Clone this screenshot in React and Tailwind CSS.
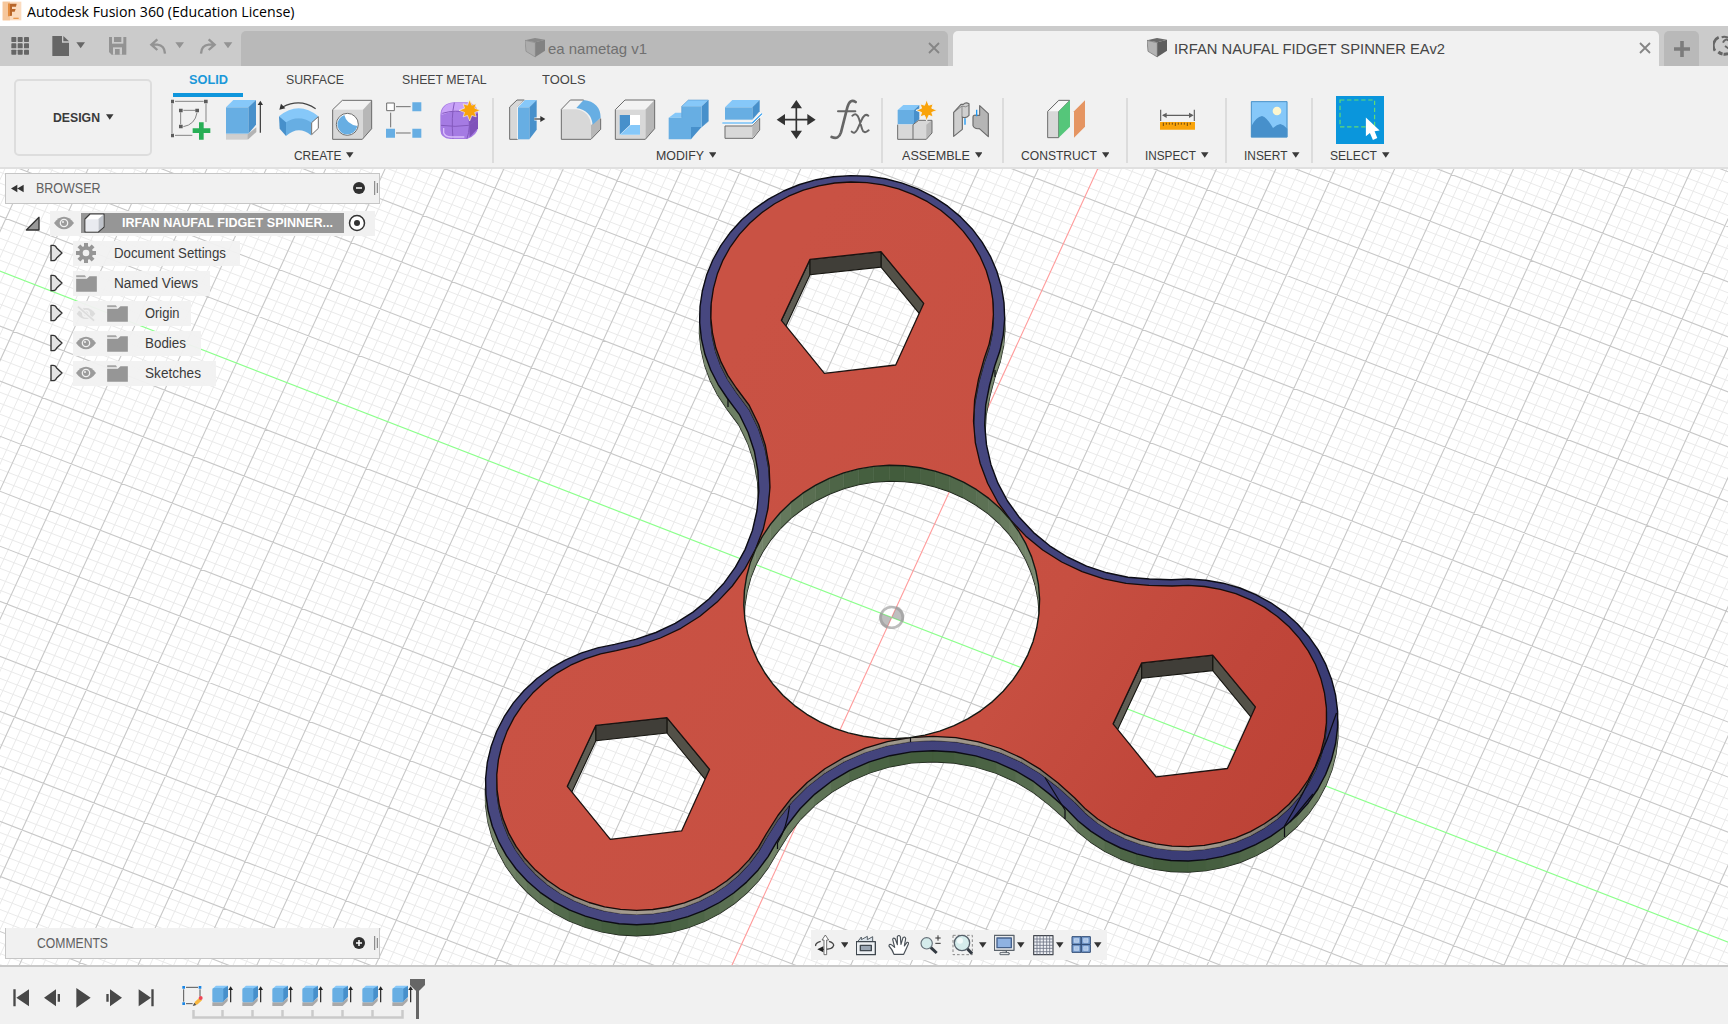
import React, { useLayoutEffect, useRef } from "react";

/* ---------- text fitted to a fixed width ---------- */
function Fit({ w, className = "", children }) {
  const ref = useRef(null);
  useLayoutEffect(() => {
    const el = ref.current;
    el.style.transform = "none";
    const n = el.getBoundingClientRect().width;
    if (n) el.style.transform = `scaleX(${w / n})`;
  }, [w]);
  return (
    <span className={`block shrink-0 text-left ${className}`} style={{ width: w }}>
      <span ref={ref} className="inline-block origin-left whitespace-nowrap">{children}</span>
    </span>
  );
}

const Caret = ({ className = "text-[#3a3a3a]" }) => (
  <svg width="7.5" height="6" viewBox="0 0 8 6" className={`shrink-0 ${className}`}>
    <path d="M0 0h8L4 6z" fill="currentColor" />
  </svg>
);

/* ---------- spinner geometry ---------- */
const U = [50.4, 19.57];
const V = [21.45, -46.7];
const CX = 891.7;
const LEVEL = { top: 602, ring: 606, base: 616.8 };
const HOLE_R = 2.7;
const ARMS = [[5.825, 0], [5.765, 120.25], [5.795, 240]];
const FILLET_D = 6.016;
const project = ([a, b], cy) => [CX + a * U[0] + b * V[0], cy + a * U[1] + b * V[1]];
const rad = (d) => (d * Math.PI) / 180;
const pol = (r, d) => [r * Math.cos(rad(d)), r * Math.sin(rad(d))];
const angle = (p, q) => (Math.atan2(q[1] - p[1], q[0] - p[0]) * 180) / Math.PI;
const norm = (d) => ((d % 360) + 360) % 360;

function outline(lobe, fillet) {
  const pts = [];
  for (let k = 0; k < 3; k++) {
    const c = pol(...ARMS[k]);
    const next = pol(...ARMS[(k + 1) % 3]);
    const f = pol(FILLET_D, k * 120 + 60);
    const prev = pol(FILLET_D, k * 120 - 60);
    const a1 = angle(c, prev);
    const span = norm(angle(c, f) - a1);
    for (let i = 0; i <= 36; i++) {
      const p = pol(lobe, a1 + (span * i) / 36);
      pts.push([c[0] + p[0], c[1] + p[1]]);
    }
    const b1 = angle(f, c);
    const turn = norm(b1 - angle(f, next));
    for (let i = 1; i < 16; i++) {
      const p = pol(fillet, b1 - (turn * i) / 16);
      pts.push([f[0] + p[0], f[1] + p[1]]);
    }
  }
  return pts;
}
const circle = Array.from({ length: 60 }, (_, i) => pol(HOLE_R, i * 6));
const toPath = (pts) => "M" + pts.map((p) => p[0].toFixed(1) + " " + p[1].toFixed(1)).join("L") + "Z";
const at = (pts, cy) => pts.map((p) => project(p, cy));

function mix(a, b, t) {
  return `rgb(${a.map((v, i) => Math.round(v + (b[i] - v) * t)).join(",")})`;
}
function wall(pts, y1, y2, inner, c1, c2) {
  const out = [];
  const A = at(pts, y1);
  for (let i = 0; i < A.length; i++) {
    const p = A[i];
    const q = A[(i + 1) % A.length];
    const dx = q[0] - p[0];
    const dy = q[1] - p[1];
    const len = Math.hypot(dx, dy) || 1;
    const facing = inner ? dx > 0 : dx < 0;
    if (facing) continue;
    const t = Math.pow(Math.abs(dy) / len, 1.6);
    const h = y2 - y1;
    out.push({
      d: toPath([p, q, [q[0], q[1] + h], [p[0], p[1] + h]]),
      c: mix(c1, c2, t),
    });
  }
  return out;
}
const OUT = outline(2.785, 3.11);
const IN = outline(2.58, 3.315);
const GREEN = [[66, 92, 60], [128, 142, 117]];
const TAN = [[164, 156, 143], [70, 68, 62]];
const greenWalls = wall(OUT, LEVEL.ring, LEVEL.base, false, GREEN[0], GREEN[1]);
const tanWalls = wall(IN, LEVEL.top, LEVEL.ring, false, TAN[0], TAN[1]);
const holeWalls = wall(circle, LEVEL.top, 617.4, true, GREEN[0], GREEN[1]);

const HEX = [[-42.7, -52.8], [28.3, -60.5], [71, -8.8], [43, 52.8], [-28.3, 61.2], [-71.3, 8.2]];
const HEX_C = [[852.7, 312.2], [1184.4, 715.7], [638.6, 778.1]];
const hexAt = (c) => HEX.map((p) => [p[0] + c[0], p[1] + c[1]]);

function gridPath(step, skip) {
  let d = "";
  const L = 34;
  for (let i = -L * step; i <= L * step; i++) {
    if (skip && i % step === 0) continue;
    const k = i / step;
    if (!skip && i === 0) continue;
    const a = project([k, -L], 617.4);
    const b = project([k, L], 617.4);
    const c = project([-L, k], 617.4);
    const e = project([L, k], 617.4);
    d += `M${a[0].toFixed(1)} ${a[1].toFixed(1)}L${b[0].toFixed(1)} ${b[1].toFixed(1)}M${c[0].toFixed(1)} ${c[1].toFixed(1)}L${e[0].toFixed(1)} ${e[1].toFixed(1)}`;
  }
  return d;
}
const MINOR = gridPath(5, true);
const MAJOR = gridPath(1, false);

function Walls({ list }) {
  return list.map((w, i) => <path key={i} d={w.d} fill={w.c} stroke={w.c} strokeWidth="0.6" />);
}

function Scene() {
  const topHole = toPath(at(circle, LEVEL.top));
  const g = project([0, 20], 617.4);
  const g2 = project([0, -20], 617.4);
  const h = project([-20, 0], 617.4);
  const h2 = project([20, 0], 617.4);
  return (
    <svg className="block h-full w-full" viewBox="0 169 1728 796" preserveAspectRatio="none">
      <defs>
        <linearGradient id="red" gradientUnits="userSpaceOnUse" x1="700" y1="400" x2="1330" y2="800">
          <stop offset="0" stopColor="#c95244" />
          <stop offset="0.55" stopColor="#c74f41" />
          <stop offset="0.8" stopColor="#c0463a" />
          <stop offset="1" stopColor="#bc4235" />
        </linearGradient>
        <linearGradient id="blue" gradientUnits="userSpaceOnUse" x1="900" y1="500" x2="1330" y2="760">
          <stop offset="0" stopColor="#47477f" />
          <stop offset="1" stopColor="#393b74" />
        </linearGradient>
        <clipPath id="hole"><path d={topHole} /></clipPath>
        {HEX_C.map((c, i) => <clipPath key={i} id={`hex${i}`}><path d={toPath(hexAt(c))} /></clipPath>)}
        <g id="grid">
          <rect x="0" y="160" width="1728" height="820" fill="#fff" />
          <path d={MINOR} stroke="#eaeaea" strokeWidth="1" fill="none" />
          <path d={MAJOR} stroke="#c8c8c8" strokeWidth="1.1" fill="none" />
          <path d={`M${g}L${g2}`} stroke="#ff9a9a" strokeWidth="1.1" />
          <path d={`M${h}L${h2}`} stroke="#8cff8c" strokeWidth="1.2" />
        </g>
      </defs>
      <use href="#grid" />
      <g strokeLinejoin="round">
        <path d={toPath(at(OUT, LEVEL.base))} fill="#4a6344" stroke="#141812" strokeWidth="1.8" />
        <Walls list={greenWalls} />
        <path d={toPath(at(OUT, LEVEL.ring))} fill="url(#blue)" stroke="#0c0c14" strokeWidth="1.4" />
        <path d={toPath(at(IN, LEVEL.ring))} fill="none" stroke="#0c0c14" strokeWidth="1.4" />
        <Walls list={tanWalls} />
        <path d={toPath(at(IN, LEVEL.top))} fill="url(#red)" stroke="#180c0a" strokeWidth="1.3" />
        <g fill="none" stroke="#0c0c14" strokeWidth="1.2">
          <path d="M789.5 806Q787 828 777.5 843v6" />
          <path d="M1045 777.500L1065 810v9" />
          <path d="M1336.500 713Q1318 770 1284.500 826v11" />
          <path d="M1313 794L1290 822M910.500 737v5M728 399v8M995 370v7" />
        </g>
        {HEX_C.map((c, i) => {
          const v = hexAt(c);
          const face = (a, b, col) => (
            <path d={toPath([v[a], v[b], [v[b][0], v[b][1] + 15.4], [v[a][0], v[a][1] + 15.4]])} fill={col} stroke="#15140f" strokeWidth="1.1" />
          );
          return (
            <g key={i}>
              <g clipPath={`url(#hex${i})`}>
                <use href="#grid" />
                {face(5, 0, "#5f5d54")}
                {face(1, 2, "#535148")}
                {face(0, 1, "#403e38")}
              </g>
              <path d={toPath(v)} fill="none" stroke="#1c1210" strokeWidth="1.3" />
            </g>
          );
        })}
        <g clipPath="url(#hole)">
          <use href="#grid" />
          <g>
            <path d={toPath(at(circle, 617.4))} fill="none" stroke="#141812" strokeWidth="2" />
            <Walls list={holeWalls} />
          </g>
        </g>
        <path d={topHole} fill="none" stroke="#141812" strokeWidth="1.4" />
      </g>
      <g fill="#8a8a8a" fillOpacity="0.55">
        <path d="M891.700 617.400L896.800 606.300A12 11.500 0 0 1 903.100 621.800Z" />
        <path d="M891.700 617.400L886.600 628.500A12 11.500 0 0 1 880.300 613Z" />
        <ellipse cx="891.700" cy="617.400" rx="11" ry="10.400" fill="none" stroke="#9a9a9a" strokeOpacity="0.65" strokeWidth="2.600" />
      </g>
    </svg>
  );
}

/* ---------- toolbar icons ---------- */
const Ico = ({ x, w = 161, children }) => (
  <svg className="block shrink-0" width={w / 3} height="42" viewBox={`${x} 297 ${w} 126`} strokeLinejoin="round">{children}</svg>
);
const B = "#67aee3", BL = "#86c8f9", BD = "#4790cb", G = "#d8d8d8", GD = "#b7b7b7", GL = "#f3f3f3", S = "#6b6b6b";
const star = (cx, cy, R) => {
  const p = [];
  for (let i = 0; i < 16; i++) {
    const r = i % 2 ? R * 0.52 : i % 4 === 0 ? R : R * 0.86;
    const a = (i * Math.PI) / 8;
    p.push([cx + r * Math.sin(a), cy - r * Math.cos(a)]);
  }
  return toPath(p);
};

const CreateIcons = () => (
  <>
    <Ico x={516}>
      <g stroke="#858585" strokeWidth="3" fill="none">
        <path d="M528 304H614M519 311V400M621 311V366M528 406H580M553 331H590M545 337V373M553 380Q588 374 594 338" />
      </g>
      <path d="M514 299h11v11h-11zM615 299h11v11h-11zM514 401h11v11h-11zM540 326h11v11h-11zM589 326h11v11h-11zM540 374h11v11h-11z" fill="#5c5c5c" />
      <path d="M600 367h14v18h20v14h-20v20h-14v-20h-19v-14h19z" fill="#27ae55" />
    </Ico>
    <Ico x={676}>
      <path d="M679 403h65l26-21v14l-24 22h-67z" fill="#b3b3b3" /><path d="M679 403h65v15h-65z" fill="#cfcfcf" />
      <path d="M679 322L701 300H769L746 322z" fill={BL} /><path d="M746 322L769 300V374L746 401z" fill={BD} />
      <path d="M679 322H746V401H679z" fill={B} />
      <path d="M782 398V312" stroke="#333" strokeWidth="3.500" /><path d="M774 315l8-13 8 13z" fill="#333" />
    </Ico>
    <Ico x={837}>
      <path d="M848 321Q900 294 947 326" fill="none" stroke="#444" strokeWidth="3.500" /><path d="M838 329l5-18 13 14z" fill="#333" />
      <path d="M837 349Q896 301 955 349L933 372Q896 340 858 372z" fill={BL} />
      <path d="M837 349L858 367V408L839 386z" fill={BD} />
      <path d="M858 367Q896 342 933 367V406Q896 375 858 408z" fill={B} />
      <path d="M935 368L955 350V385L935 404z" fill="#fff" stroke={S} strokeWidth="3" />
    </Ico>
    <Ico x={997}>
      <path d="M998 329L1028 300H1117L1090 329z" fill={GL} /><path d="M1090 329L1117 300V386L1088 418z" fill={GD} />
      <path d="M998 329H1090V418H998z" fill={G} /><path d="M999 329L1028 301H1116V386L1088 418H999z" fill="none" stroke={S} strokeWidth="3" />
      <circle cx="1043" cy="373" r="33" fill="#fff" stroke={S} strokeWidth="3" />
      <path d="M1034 345Q1040 372 1073 378A30 30 0 1 1 1034 345z" fill={B} />
    </Ico>
    <Ico x={1158}>
      <path d="M1188 320H1232M1172 338V382M1188 399H1232" stroke="#6f6f6f" strokeWidth="3" />
      <rect x="1160" y="309" width="23" height="23" fill="#fff" stroke={S} strokeWidth="3" />
      <path d="M1237 307h27v27h-27zM1158 386h27v27h-27zM1237 386h27v27h-27z" fill={B} />
    </Ico>
    <Ico x={1319}>
      <path d="M1320 345Q1322 310 1360 307H1400Q1434 312 1433 345V380Q1432 405 1400 417H1350Q1321 415 1320 390z" fill="#a57be3" />
      <path d="M1324 335Q1330 310 1362 308L1415 308 1405 332Q1360 330 1324 345z" fill="#c9a3f8" />
      <path d="M1405 350L1433 340V385L1408 412z" fill="#7f52ba" />
      <path d="M1322 376Q1365 382 1405 376L1432 358M1362 308Q1352 350 1358 416M1326 340Q1365 328 1404 338Q1412 380 1400 416" fill="none" stroke="#8459bd" strokeWidth="3" />
      <path d="M1330 384V398Q1334 410 1352 411H1392" fill="none" stroke="#d9bdfb" strokeWidth="4" />
      <path d={star(1408, 331, 32)} fill="#f9a30a" stroke="#f1f1f1" strokeWidth="2" />
    </Ico>
  </>
);

const ModifyIcons = () => (
  <>
    <Ico x={80}>
      <path d="M88 321L110 300H132L112 321V418H88z" fill={G} stroke={S} strokeWidth="3" />
      <path d="M110 321L132 300V418H110z" fill="#f1f1f1" />
      <path d="M113 322L134 300H169L147 322z" fill={BL} /><path d="M147 322L169 300V389L147 418z" fill={BD} /><path d="M113 322H147V418H113z" fill={B} />
      <path d="M162 357H184" stroke="#fff" strokeWidth="9" /><path d="M162 357H182" stroke="#333" strokeWidth="3.500" /><path d="M180 348l15 9-15 9z" fill="#333" />
    </Ico>
    <Ico x={241}>
      <path d="M245 328L272 300H312L290 328z" fill={GL} /><path d="M334 375L363 353V388L334 418z" fill={GD} />
      <path d="M245 328H290Q330 334 334 375V418H245z" fill={G} />
      <path d="M290 324L312 300Q362 306 363 353L339 374Q335 332 290 324z" fill={B} />
      <path d="M312 300H272L245 328V418H334L363 388V356" fill="none" stroke={S} strokeWidth="3" />
    </Ico>
    <Ico x={402}>
      <path d="M406 329L435 300H524L496 329z" fill={GL} /><path d="M496 329L524 300V386L496 418z" fill={GD} /><path d="M406 329H496V418H406z" fill={G} />
      <path d="M406 329L435 300H524V386L496 418H406z" fill="none" stroke={S} strokeWidth="3" />
      <path d="M419 345H480V404H419z" fill="#fff" /><path d="M419 345H450V375L419 404z" fill={BD} /><path d="M452 375H480V404H420z" fill={BL} />
    </Ico>
    <Ico x={562}>
      <path d="M606 319L626 300H686L666 319z" fill={BL} /><path d="M666 319L686 300V364L666 381z" fill={BD} /><path d="M567 353L587 338H606V353z" fill={BL} />
      <path d="M634 381H666L648 401 634 418z" fill={BD} /><path d="M606 319H666V381H634V418H567V353H606z" fill={B} />
      <path d="M606 353V319L626 300H686V364L666 381" fill="none" stroke={BD} strokeWidth="1.5" />
    </Ico>
    <Ico x={724}>
      <path d="M736 322L758 300H840L818 322z" fill={BL} /><path d="M818 322L840 300V334L818 359z" fill={BD} /><path d="M736 322H818V359H736z" fill={B} />
      <path d="M736 378H818L840 355V390L820 415H736z" fill={G} stroke={S} strokeWidth="3" /><path d="M818 378L838 358V390L818 413z" fill={GD} />
      <path d="M728 369H818L847 341" fill="none" stroke="#fff" strokeWidth="8" /><path d="M728 369H818L847 341" fill="none" stroke="#2f9df0" strokeWidth="3.500" />
    </Ico>
    <Ico x={885}>
      <path d="M949 318V400M910 359H988" stroke="#333" strokeWidth="5" />
      <path d="M932 325l17-25 17 25zM932 392l17 25 17-25zM915 342l-25 17 25 17zM982 342l25 17-25 17z" fill="#333" />
    </Ico>
    <Ico x={1044}>
      <g fill="none" stroke="#666" strokeWidth="8" strokeLinecap="round">
        <path d="M1127 306Q1110 294 1102 322L1083 397Q1076 420 1055 411" />
        <path d="M1074 334H1126M1117 347Q1131 336 1137 356L1146 386Q1151 404 1166 391M1165 347Q1154 338 1144 362L1132 388Q1124 404 1115 395" strokeWidth="6" />
      </g>
    </Ico>
  </>
);

const AssembleIcons = () => (
  <>
    <Ico x={51}>
      <path d="M53 330L70 315H118L102 330z" fill={BL} /><path d="M102 330L118 315V358L102 373z" fill={BD} /><path d="M53 330H102V373H53z" fill={B} />
      <path d="M53 374H99V418H53z" fill={G} /><path d="M99 374L114 361H156V399L139 418H99z" fill={G} /><path d="M139 374L156 361V399L139 418z" fill={GD} />
      <path d="M53 374V418H139L156 399V361H116L99 374V418" fill="none" stroke={S} strokeWidth="3" />
      <path d={star(140, 331, 32)} fill="#f9a30a" stroke="#f1f1f1" strokeWidth="3" />
    </Ico>
    <Ico x={211} w={124}>
      <path d="M222 337L244 313H251Q258 305 268 311V346Q260 356 248 351V388L222 409z" fill="#cfcfcf" stroke={S} strokeWidth="3.500" />
      <path d="M222 337L247 318V352M247 318Q257 324 268 316" fill="none" stroke={S} strokeWidth="2" />
      <path d="M326 341L300 317V346H290Q280 344 280 351V377Q284 388 299 386L326 410z" fill="#b5b5b5" stroke={S} strokeWidth="3.500" />
      <path d="M256 355V374M291 329V349" stroke="#1c97f2" strokeWidth="4" />
    </Ico>
  </>
);

const ConstructIcon = () => (
  <Ico x={480}>
    <path d="M503 334L536 301H569L536 334V413H503z" fill={G} stroke={S} strokeWidth="3" /><path d="M506 334L537 303H566L536 334z" fill="#f8f8f8" />
    <path d="M536 334L570 301V380L536 413z" fill="#55c67a" /><path d="M582 334L615 301V380L582 413z" fill="#e59562" />
  </Ico>
);
const InspectIcon = () => (
  <Ico x={810}>
    <path d="M842 329V363M943 329V363M850 346H936" stroke="#5f5f5f" strokeWidth="3.500" /><path d="M846 346l14-8v16zM941 346l-14-8v16z" fill="#5f5f5f" />
    <path d="M840 366H945V389H840z" fill="#f9a30a" /><path d="M850 368v10M859 368v6M868 368v6M877 368v6M886 368v10M895 368v6M904 368v6M913 368v6M922 368v10M931 368v6" stroke="#6e4a10" strokeWidth="3" />
  </Ico>
);
const InsertIcon = () => (
  <Ico x={1090}>
    <path d="M1114 304H1223V412H1114z" fill={BL} /><path d="M1114 380Q1130 350 1147 348Q1162 352 1180 384Q1192 374 1202 372Q1212 374 1223 386V412H1114z" fill={BD} />
    <circle cx="1192" cy="333" r="13" fill="#fdf6cf" /><path d="M1115 305H1222V411H1115z" fill="none" stroke="#4d93c8" strokeWidth="3" />
  </Ico>
);
const SelectIcon = () => (
  <svg className="block" width="48" height="48" viewBox="109 288 143 143">
    <path d="M109 288h143v143h-143z" fill="#0a96dc" />
    <path d="M121 300H224V380H121z" fill="none" stroke="#62dc73" strokeWidth="3.500" strokeDasharray="13 8" />
    <path d="M198 352L239 391 224 393 232 413 219 419 210 398 198 408z" fill="#fff" />
  </svg>
);

function Group({ width, pad, labelPad, label, labelW, children, last }) {
  return (
    <div className="relative flex h-[70px] shrink-0 flex-col" style={{ width }}>
      <div className="flex h-[51px] items-start pt-[3px]" style={{ paddingLeft: pad }}>{children}</div>
      <div className="flex h-[17px] items-center gap-[5px] text-[13px] text-[#3b3b3b]" style={{ paddingLeft: labelPad }}>
        <Fit w={labelW}>{label}</Fit>
        <span className="-mt-[2px]"><Caret /></span>
      </div>
      {!last && <div className="absolute right-0 top-[2px] h-[65px] w-[2px] bg-[#dcdcdc]" />}
    </div>
  );
}

/* ---------- tab strip ---------- */
const Cube = ({ dim }) => (
  <svg width="20" height="20" viewBox="0 0 60 60" className={`shrink-0 ${dim ? "opacity-60" : ""}`}>
    <path d="M0 7L30 0 60 5 31 13z" fill="#6a6a6a" /><path d="M0 7L31 14V57L3 40z" fill={dim ? "#a5a5a5" : "#b4b4b4"} stroke="#6a6a6a" strokeWidth="2" /><path d="M31 13L60 5V38L31 57z" fill="#5e5e5e" />
  </svg>
);
const Close = () => (
  <svg width="12" height="12" viewBox="0 0 12 12" className="shrink-0"><path d="M1 1L11 11M11 1L1 11" stroke="#858585" strokeWidth="1.800" /></svg>
);

function TabStrip() {
  return (
    <div className="flex h-10 items-end overflow-hidden bg-[#cbcbcb]">
      <svg className="mr-[1px] block shrink-0" width="240" height="40" viewBox="0 78 720 120">
        <g fill="#666">
          {[0, 1, 2].map((r) => [0, 1, 2].map((c) => <rect key={`${r}${c}`} x={34 + c * 19} y={111 + r * 19} width="15" height="15" rx="2" />))}
          <path d="M157 108h29v20h21v40h-50z" /><path d="M190 108l17 16h-17z" /><path d="M229 127h26l-13 18z" />
        </g>
        <g fill="#939393">
          <path d="M327 111h52v53h-44l-8-8z" /><path d="M336 111h34v20h-34z" fill="#cbcbcb" /><path d="M342 111h22v15h-22z" /><path d="M339 142h27v22h-27z" fill="#cbcbcb" /><path d="M345 147h14v17h-14z" />
          <path d="M526 127h26l-13 18zM671 127h26l-13 18z" />
        </g>
        <g fill="none" stroke="#939393" strokeWidth="7"><path d="M472 118L454 134 472 150M456 134H472Q494 136 495 161" /><path d="M626 118L644 134 626 150M642 134H626Q604 136 603 161" /></g>
      </svg>
      <div className="flex h-[35px] w-[707px] shrink-0 items-center rounded-t-[5px] bg-[#b9b9b9] pb-px pl-[284px] pr-[8px] text-[15px] text-[#707070]">
        <Cube dim />
        <Fit w={99} className="ml-[3px]">ea nametag v1</Fit>
        <div className="ml-auto"><Close /></div>
      </div>
      <div className="ml-[5px] flex h-[35px] w-[706px] shrink-0 items-center rounded-t-[5px] bg-[#f1f1f1] pb-px pl-[194px] pr-[8px] text-[15px] text-[#454545]">
        <Cube />
        <Fit w={271} className="ml-[7px]">IRFAN NAUFAL FIDGET SPINNER EAv2</Fit>
        <div className="ml-auto"><Close /></div>
      </div>
      <div className="ml-[5px] flex h-[35px] w-[35px] shrink-0 items-center justify-center rounded-t-[5px] bg-[#b9b9b9]">
        <svg width="16" height="16" viewBox="0 0 16 16"><path d="M8 0V16M0 8H16" stroke="#7c7c7c" strokeWidth="3.600" /></svg>
      </div>
      <svg className="ml-[14px] block shrink-0" width="16" height="40" viewBox="1240 78 48 120">
        <path d="M1257 112A27 27 0 0 0 1246 152" fill="none" stroke="#666" strokeWidth="8" /><path d="M1256 156Q1270 167 1290 160" fill="none" stroke="#666" strokeWidth="9" strokeDasharray="14 3" />
        <path d="M1266 112Q1274 108 1290 114M1270 128Q1276 112 1290 124M1276 138L1290 148" stroke="#666" strokeWidth="6" fill="none" />
      </svg>
    </div>
  );
}

/* ---------- browser tree ---------- */
const Eye = () => (
  <svg width="20" height="14" viewBox="0 0 60 42" className="shrink-0">
    <path d="M0 21Q14 2 30 2T60 21Q46 40 30 40T0 21z" fill="#9b9b9b" /><circle cx="30" cy="21" r="13" fill="#f1f1f1" /><circle cx="30" cy="21" r="9" fill="#9b9b9b" /><circle cx="27" cy="18" r="3" fill="#f1f1f1" />
  </svg>
);
const EyeOff = () => (
  <svg width="20" height="17" viewBox="0 0 60 51" className="shrink-0">
    <path d="M2 26Q14 9 30 9T58 26Q46 42 30 42T2 26z" fill="#dcdcdc" /><circle cx="30" cy="26" r="12" fill="#f1f1f1" /><circle cx="30" cy="26" r="7" fill="#dcdcdc" />
    <path d="M4 4L56 50" stroke="#f1f1f1" strokeWidth="11" /><path d="M6 5L54 47" stroke="#dcdcdc" strokeWidth="5" />
  </svg>
);
const Folder = () => (
  <svg width="21" height="17" viewBox="0 0 62 51" className="shrink-0">
    <path d="M0 1h26l4 6H0z" fill="#a5a5a5" /><path d="M0 11h32l8-7h22v46H0z" fill="#969696" />
  </svg>
);
const Gear = () => (
  <svg width="20" height="20" viewBox="-30 -30 60 60" className="shrink-0">
    <g fill="#969696">{[0, 45, 90, 135].map((a) => <rect key={a} x="-6" y="-30" width="12" height="60" transform={`rotate(${a})`} />)}<circle r="21" /></g><circle r="10" fill="#f1f1f1" />
  </svg>
);
function TreeRow({ w, icons, label, labelW, gap }) {
  return (
    <div className="flex h-[30px] items-center pl-[44.5px]">
      <svg width="13" height="18" viewBox="0 0 39 54" className="shrink-0"><path d="M3 4H9Q17 4 20 12L36 27 20 42Q17 50 9 50H3z" fill="#e4e4e4" stroke="#333" strokeWidth="4" strokeLinejoin="round" /></svg>
      <div className="ml-[10.5px] flex h-[25px] items-center bg-[#f1f1f1]/95 pl-[3px] text-[14px] text-[#3b3b3b]" style={{ width: w }}>
        {icons}
        <Fit w={labelW} className={gap}>{label}</Fit>
      </div>
    </div>
  );
}
const Grip = () => (
  <svg width="4" height="14" viewBox="0 0 4 14" className="shrink-0"><path d="M.7 0V14M3.300 2V12" stroke="#777" strokeWidth="1" /></svg>
);

function Browser() {
  return (
    <div className="absolute left-[5px] top-[4px] w-[375px]">
      <div className="flex h-[31px] items-center border border-[#c6c6c6] bg-[#f1f1f1] pb-px pl-[5px] pr-[1px] text-[14px] text-[#606060]">
        <svg width="13" height="9" viewBox="0 0 39 27"><path d="M19 2V25L0 13.500zM38 2V25L19 13.500z" fill="#333" /></svg>
        <Fit w={64.5} className="ml-[12px]">BROWSER</Fit>
        <svg className="ml-auto mr-[9px]" width="12" height="12" viewBox="0 0 12 12"><circle cx="6" cy="6" r="6" fill="#303030" /><path d="M3 6H9" stroke="#fff" strokeWidth="1.500" /></svg>
        <Grip />
      </div>
      <div className="mt-[4px] flex h-[30px] items-center pl-[20px]">
        <svg width="15" height="15" viewBox="0 0 45 45" className="shrink-0"><path d="M42 4V42H4z" fill="#999" stroke="#333" strokeWidth="4" strokeLinejoin="round" /></svg>
        <div className="ml-[10px] flex h-[25px] w-[325px] items-center bg-[#f1f1f1] pl-[4px]">
          <Eye />
          <div className="ml-[7px] flex h-5 w-[263px] items-center bg-[#969696] pl-[3px] text-[13.5px] font-bold text-white">
            <svg width="21" height="20" viewBox="0 0 63 60" className="shrink-0"><path d="M3 18L18 3H60V42L43 57H3z" fill="#fff" stroke="#3c3c3c" strokeWidth="3.500" strokeLinejoin="round" /><path d="M43 18L58 5V41L43 55z" fill="#bfc3ca" /><path d="M5 19H43V55H5z" fill="#e9ebf0" /></svg>
            <Fit w={211} className="ml-[17px]">IRFAN NAUFAL FIDGET SPINNER...</Fit>
          </div>
          <svg className="ml-[4px]" width="18" height="18" viewBox="0 0 18 18"><circle cx="9" cy="9" r="7.500" fill="#fff" stroke="#333" strokeWidth="1.500" /><circle cx="9" cy="9" r="3" fill="#333" /></svg>
        </div>
      </div>
      <TreeRow w={167} icons={<Gear />} label="Document Settings" labelW={112} gap="ml-[18px]" />
      <TreeRow w={137} icons={<Folder />} label="Named Views" labelW={84} gap="ml-[17px]" />
      <TreeRow w={118} icons={<><EyeOff /><div className="w-[11px]" /><Folder /></>} label="Origin" labelW={34.5} gap="ml-[17px]" />
      <TreeRow w={128} icons={<><Eye /><div className="w-[11px]" /><Folder /></>} label="Bodies" labelW={41} gap="ml-[17px]" />
      <TreeRow w={143} icons={<><Eye /><div className="w-[11px]" /><Folder /></>} label="Sketches" labelW={56} gap="ml-[17px]" />
    </div>
  );
}

function Comments() {
  return (
    <div className="absolute bottom-[6px] left-[5px] flex h-[31px] w-[375px] items-center border border-t-0 border-[#c6c6c6] bg-[#f1f1f1] pl-[30.5px] pr-[1px] text-[14px] text-[#606060]">
      <Fit w={71}>COMMENTS</Fit>
      <svg className="ml-auto mr-[9px]" width="12" height="12" viewBox="0 0 12 12"><circle cx="6" cy="6" r="6" fill="#303030" /><path d="M3 6H9M6 3V9" stroke="#fff" strokeWidth="1.500" /></svg>
      <Grip />
    </div>
  );
}

/* ---------- view controls ---------- */
const NavIco = ({ x, w = 63, children }) => (
  <svg className="block shrink-0" width={w / 3} height="30" viewBox={`${x} 60 ${w} 90`} strokeLinejoin="round">{children}</svg>
);
const NavCaret = ({ w }) => (
  <span className="flex shrink-0 justify-center" style={{ width: w }}><Caret className="text-[#333]" /></span>
);
function NavBar() {
  return (
    <div className="absolute bottom-[5px] left-[811px] flex h-[30px] w-[296px] items-center bg-[#f1f1f1]">
      <NavIco x={63} w={85}>
        <path d="M92 94Q75 99 77 108M117 94Q131 98 131 106Q128 120 92 118" fill="none" stroke="#444" strokeWidth="4" />
        <path d="M102 90H96L106 75L116 90H110V134H102z" fill="#fff" stroke="#555" strokeWidth="2.500" /><path d="M82 118l18-9v18z" fill="#222" />
      </NavIco>
      <NavCaret w={32 / 3} />
      <div className="w-[6px]" />
      <NavIco x={198}>
        <path d="M203 95L214 81V89L232 79V89L248 80V95" fill="#dde5ec" stroke="#555e66" strokeWidth="3" />
        <path d="M199 95H256V134H199z" fill="#eef1f4" stroke="#40484f" strokeWidth="4" /><path d="M211 106H244V122H211z" fill="#9aa6b4" stroke="#40484f" strokeWidth="4" />
      </NavIco>
      <div className="w-[11px]" />
      <NavIco x={294}>
        <path d="M312 133Q308 120 297 108Q297 101 304 104L314 112L308 88Q310 81 316 87L322 104L322 80Q327 73 331 80L333 103L339 83Q345 78 347 86L343 108L351 97Q357 96 355 102L346 122L341 133z" fill="#fff" stroke="#4b5259" strokeWidth="3.500" />
      </NavIco>
      <div className="w-[11px]" />
      <NavIco x={390} w={66}>
        <path d="M422 112L440 129" stroke="#333a42" strokeWidth="9" /><circle cx="410" cy="100" r="17" fill="#d5ecec" stroke="#67727b" strokeWidth="3.500" />
        <path d="M444 76V92M436 84H452M436 100H452" stroke="#333" strokeWidth="3" />
      </NavIco>
      <div className="w-[10.5px]" />
      <NavIco x={488}>
        <path d="M491 76H549V134H491z" fill="none" stroke="#888" strokeWidth="3" strokeDasharray="8 6" />
        <path d="M534 116L548 131" stroke="#333a42" strokeWidth="9" /><circle cx="518" cy="99" r="23" fill="#d5ecec" stroke="#56606a" strokeWidth="4" /><circle cx="512" cy="92" r="9" fill="#f2fafa" />
      </NavIco>
      <div className="w-[5px]" />
      <NavCaret w={9} />
      <div className="w-[7px]" />
      <NavIco x={613}>
        <path d="M614 76H673V121H614z" fill="#e8eaec" stroke="#5c646c" strokeWidth="4" /><path d="M622 84H665V113H622z" fill="#8fb2e2" stroke="#45618c" strokeWidth="4" />
        <path d="M638 122H650V131H660" fill="none" stroke="#5c646c" strokeWidth="4" /><path d="M631 128H658V134H631z" fill="#fff" stroke="#5c646c" strokeWidth="3" />
      </NavIco>
      <div className="w-[1px]" />
      <NavCaret w={9} />
      <div className="w-[8px]" />
      <NavIco x={729}>
        <path d="M731 77H789V134H731z" fill="#f0f2f6" stroke="#44484f" strokeWidth="3.500" /><path d="M741 77V134M750 77V134M760 77V134M770 77V134M779 77V134M731 87H789M731 96H789M731 106H789M731 115H789M731 125H789" stroke="#6d7484" strokeWidth="2.500" />
      </NavIco>
      <div className="w-[1px]" />
      <NavCaret w={9} />
      <div className="w-[7px]" />
      <NavIco x={844}>
        {[[847, 80], [875, 80], [847, 104], [875, 104]].map(([a, b]) => <g key={a + b * 7}><rect x={a} y={b} width="27" height="23" fill="#7ba0d2" stroke="#2e4a74" strokeWidth="3" /><rect x={a + 7} y={b + 6} width="13" height="11" fill="#a9c4e8" stroke="#e1ecf8" strokeWidth="1.500" /></g>)}
      </NavIco>
      <div className="w-[1px]" />
      <NavCaret w={9} />
    </div>
  );
}

/* ---------- timeline ---------- */
const TimelineExtrude = () => (
  <svg className="block shrink-0" width="30" height="22" viewBox="639 196 90 66" overflow="visible">
    <path d="M637 248H667L683 235V244L668 259H637z" fill="#a9a9a9" /><path d="M637 208L648 198H684L672 208z" fill={BL} /><path d="M668 208L684 198V232L668 248z" fill={BD} /><rect x="637" y="205" width="33" height="43" rx="5" fill={B} />
    <path d="M692 248V208" stroke="#222" strokeWidth="3.500" /><path d="M685 211l7-11 7 11z" fill="#222" />
  </svg>
);
function Timeline() {
  return (
    <div className="flex h-[59px] border-t-2 border-[#c9c9c9] bg-[#f1f1f1]">
      <svg className="block shrink-0" width="182" height="57" viewBox="0 141 546 171">
        <g fill="#484848">
          <path d="M40 208h7v51h-7zM87 208v51L49 233.500zM168 208v51l-36-25.500zM173 222h7v23h-7zM229 204v59l43-29.500zM319 222h7v23h-7zM330 208v51l36-25.500zM416 208v51l37-25.500zM454 208h7v51h-7z" />
        </g>
      </svg>
      <div className="flex flex-col pt-[18px]">
        <div className="flex">
          <svg className="block shrink-0" width="30.500" height="22" viewBox="546 196 91.500 66">
            <path d="M558 203H594M551 209V246M600 209V230M558 252H578" stroke="#555" strokeWidth="3" />
            <path d="M547 199h8v8h-8zM596 199h8v8h-8zM547 248h8v8h-8z" fill="#1a86e6" />
            <path d="M581 258L585 246L598 234L606 242L593 254z" fill="#f8b63e" /><circle cx="602" cy="235" r="6" fill="#ee4655" /><path d="M578 259l5-10 6 7z" fill="#555" />
          </svg>
          {Array.from({ length: 7 }, (_, i) => <TimelineExtrude key={i} />)}
        </div>
        <svg className="block" width="240" height="12" viewBox="182 1007 240 12">
          <path d="M193.500 1010V1017.500H402.500V1010M222.500 1010V1017M252.500 1010V1017M282.500 1010V1017M312.500 1010V1017M342.500 1010V1017M372.500 1010V1017" fill="none" stroke="#cacaca" strokeWidth="2.500" />
        </svg>
      </div>
      <svg className="-ml-[12.5px] mt-[12px] block shrink-0" width="15" height="40" viewBox="0 0 15 40">
        <path d="M0 0H15V6L9.500 11.500H5.500L0 6z" fill="#666" /><path d="M7.500 8V40" stroke="#666" strokeWidth="3" />
      </svg>
    </div>
  );
}

export default function App() {
  return (
    <div className="flex h-[1024px] w-[1728px] flex-col overflow-hidden bg-[#f1f1f1] font-['Liberation_Sans',sans-serif] leading-none">
      <header className="flex h-[26px] items-start bg-white pl-[2px] pt-[1px]">
        <svg className="block" width="20" height="20" viewBox="0 0 60 60">
          <path d="M2 2H58V58H2z" fill="#fbdcc0" /><path d="M2 2H24V58H2z" fill="#f6c79c" />
          <path d="M18 8H44L42 17H30V24H41L38 32H30V44L18 46z" fill="#b8662a" /><path d="M18 8H24V45H18z" fill="#e38b3e" /><path d="M34 50H50V54H34z" fill="#e9994f" />
        </svg>
        <Fit w={267.5} className="ml-[5px] mt-[4px] font-['Open_Sans',sans-serif] text-[14.5px] text-black">Autodesk Fusion 360 (Education License)</Fit>
      </header>
      <TabStrip />
      <div className="flex h-[103px] border-b-2 border-[#e0e0e0]">
        <button className="ml-[14px] mt-[13px] flex h-[77px] w-[138px] shrink-0 items-center rounded-[5px] border-2 border-[#dddddd] pl-[37px] text-[13.5px] font-bold text-[#3a3a3a]">
          <Fit w={47}>DESIGN</Fit>
          <span className="ml-[6px] -mt-px"><Caret /></span>
        </button>
        <div className="flex flex-col">
          <nav className="flex h-[30px] items-start pl-[21px] text-[13.5px] text-[#454545]">
            <div className="flex h-[31px] w-[70px] shrink-0 flex-col items-center justify-between pt-[7px] font-bold text-[#1b98d9]">
              <Fit w={39}>SOLID</Fit>
              <span className="block h-[4px] w-full bg-[#0f96dc]" />
            </div>
            <div className="flex pt-[7px]">
              <Fit w={58} className="ml-[42.500px]">SURFACE</Fit>
              <Fit w={84.5} className="ml-[58px]">SHEET METAL</Fit>
              <Fit w={43.5} className="ml-[56px]">TOOLS</Fit>
            </div>
          </nav>
          <div className="flex">
            <Group width={341.5} pad={19.3} labelPad={141.6} label="CREATE" labelW={47.5}><CreateIcons /></Group>
            <Group width={389.500} pad={13} labelPad={162.3} label="MODIFY" labelW={48}><ModifyIcons /></Group>
            <Group width={121} pad={13.5} labelPad={18.8} label="ASSEMBLE" labelW={68}><AssembleIcons /></Group>
            <Group width={124} pad={35.500} labelPad={16.8} label="CONSTRUCT" labelW={76}><ConstructIcon /></Group>
            <Group width={98.500} pad={21.800} labelPad={17} label="INSPECT" labelW={51}><InspectIcon /></Group>
            <Group width={86} pad={16.600} labelPad={17} label="INSERT" labelW={43.5}><InsertIcon /></Group>
            <Group width={120} pad={23.5} labelPad={17.5} label="SELECT" labelW={47} last><div className="-mt-[3px]"><SelectIcon /></div></Group>
          </div>
        </div>
      </div>
      <main className="relative h-[796px] overflow-hidden bg-white">
        <Scene />
        <Browser />
        <Comments />
        <NavBar />
      </main>
      <Timeline />
    </div>
  );
}
